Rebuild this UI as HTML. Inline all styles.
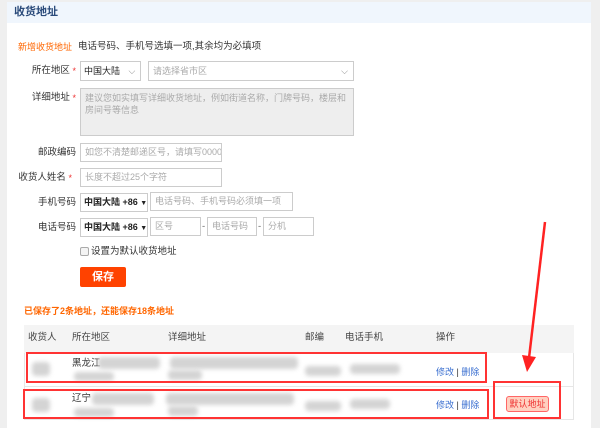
<!DOCTYPE html>
<html><head><meta charset="utf-8"><style>
*{margin:0;padding:0;box-sizing:border-box}
body{width:600px;height:428px;overflow:hidden;background:#efefef;font-family:"Liberation Sans","Noto Sans CJK SC",sans-serif;font-size:9.5px;color:#333;position:relative;line-height:12px}
.abs{position:absolute}
#panel{left:7px;top:2px;width:584px;height:426px;background:#fff}
#hd{left:7px;top:2px;width:584px;height:21px;background:#f0f6fd;color:#2a4a7a;font-size:11px;padding:4px 7px;font-weight:bold}
.lbl{width:70px;text-align:right;font-size:9.5px;color:#333;white-space:nowrap}
.lbl i{color:#e33;font-style:normal;font-size:9px;vertical-align:top}
.in{border:1px solid #ccc;background:#fff;color:#aaa;font-size:9px;padding:0 4px;white-space:nowrap;overflow:hidden;line-height:17px}
.sel{border:1px solid #ccc;background:#fff;color:#222;font-size:9px;padding:0 3px;font-weight:bold;white-space:nowrap;overflow:hidden;line-height:17px}
.blob{background:#d4d4d4;filter:blur(2px);border-radius:4px}
.th{top:332px;font-size:9.5px;color:#444}
.rb{border:2px solid #f33}
a{color:#3a6fd0;text-decoration:none}
</style></head><body>
<div id="panel" class="abs"></div>
<div id="hd" class="abs">收货地址</div>
<div class="abs" style="left:18px;top:41px;color:#f60;font-size:9px">新增收货地址</div>
<div class="abs" style="left:78px;top:41px">电话号码、手机号选填一项,其余均为必填项</div>

<div class="abs lbl" style="left:6px;top:65px">所在地区 <i>*</i></div>
<div class="abs sel" style="left:80px;top:61px;width:61px;height:20px;font-weight:normal;line-height:18px">中国大陆 <span style="color:#888;margin-left:6px">⌵</span></div>
<div class="abs in" style="left:148px;top:61px;width:206px;height:20px;line-height:18px">请选择省市区<span class="abs" style="right:5px;top:0;color:#888">⌵</span></div>

<div class="abs lbl" style="left:6px;top:92px">详细地址 <i>*</i></div>
<div class="abs in" style="left:80px;top:88px;width:274px;height:48px;background:#eee;white-space:normal;line-height:12px;padding:3px 4px;font-size:9px">建议您如实填写详细收货地址，例如街道名称，门牌号码，楼层和房间号等信息</div>

<div class="abs lbl" style="left:6px;top:147px">邮政编码</div>
<div class="abs in" style="left:80px;top:143px;width:142px;height:19px">如您不清楚邮递区号，请填写000000</div>
<div class="abs lbl" style="left:2px;top:172px">收货人姓名 <i>*</i></div>
<div class="abs in" style="left:80px;top:168px;width:142px;height:19px">长度不超过25个字符</div>

<div class="abs lbl" style="left:6px;top:197px">手机号码</div>
<div class="abs sel" style="left:80px;top:193px;width:68px;height:19px">中国大陆 +86 <span style="font-size:7px">▼</span></div>
<div class="abs in" style="left:150px;top:192px;width:143px;height:19px">电话号码、手机号码必须填一项</div>
<div class="abs lbl" style="left:6px;top:222px">电话号码</div>
<div class="abs sel" style="left:80px;top:218px;width:68px;height:19px">中国大陆 +86 <span style="font-size:7px">▼</span></div>
<div class="abs in" style="left:150px;top:217px;width:51px;height:19px">区号</div>
<div class="abs" style="left:202px;top:221px;color:#666">-</div>
<div class="abs in" style="left:207px;top:217px;width:50px;height:19px">电话号码</div>
<div class="abs" style="left:258px;top:221px;color:#666">-</div>
<div class="abs in" style="left:263px;top:217px;width:51px;height:19px">分机</div>

<div class="abs" style="left:80px;top:247px;width:9px;height:9px;border:1px solid #aaa;border-radius:2px;background:#f4f4f4"></div>
<div class="abs" style="left:91px;top:246px">设置为默认收货地址</div>
<div class="abs" style="left:80px;top:267px;width:46px;height:20px;background:#ff4200;border-radius:2px;color:#fff;font-weight:bold;font-size:11px;text-align:center;line-height:20px">保存</div>

<div class="abs" style="left:24px;top:305px;color:#f60;font-weight:bold;font-size:9px">已保存了2条地址，还能保存18条地址</div>

<div class="abs" style="left:24px;top:325px;width:550px;height:95px;border:1px solid #e6e6e6"></div>
<div class="abs" style="left:24px;top:325px;width:550px;height:28px;background:#f4f4f4"></div>
<div class="abs" style="left:24px;top:386px;width:550px;height:1px;background:#e6e6e6"></div>
<div class="abs th" style="left:28px">收货人</div>
<div class="abs th" style="left:72px">所在地区</div>
<div class="abs th" style="left:168px">详细地址</div>
<div class="abs th" style="left:305px">邮编</div>
<div class="abs th" style="left:345px">电话手机</div>
<div class="abs th" style="left:436px">操作</div>

<div class="abs blob" style="left:32px;top:362px;width:18px;height:14px"></div>
<div class="abs" style="left:72px;top:358px">黑龙江</div>
<div class="abs blob" style="left:98px;top:357px;width:62px;height:12px"></div>
<div class="abs blob" style="left:74px;top:372px;width:40px;height:9px"></div>
<div class="abs blob" style="left:170px;top:357px;width:128px;height:12px"></div>
<div class="abs blob" style="left:168px;top:370px;width:34px;height:10px"></div>
<div class="abs blob" style="left:305px;top:366px;width:36px;height:10px"></div>
<div class="abs blob" style="left:350px;top:364px;width:50px;height:10px"></div>
<div class="abs" style="left:436px;top:366px;font-size:9px"><a>修改</a> | <a>删除</a></div>

<div class="abs blob" style="left:32px;top:398px;width:18px;height:14px"></div>
<div class="abs" style="left:72px;top:393px">辽宁</div>
<div class="abs blob" style="left:92px;top:393px;width:62px;height:12px"></div>
<div class="abs blob" style="left:74px;top:408px;width:40px;height:9px"></div>
<div class="abs blob" style="left:166px;top:393px;width:128px;height:12px"></div>
<div class="abs blob" style="left:168px;top:406px;width:30px;height:10px"></div>
<div class="abs blob" style="left:305px;top:401px;width:36px;height:10px"></div>
<div class="abs blob" style="left:350px;top:399px;width:40px;height:10px"></div>
<div class="abs" style="left:436px;top:399px;font-size:9px"><a>修改</a> | <a>删除</a></div>

<div class="abs" style="left:506px;top:396px;width:43px;height:16px;background:#ffd0c0;border:1px solid #f66;border-radius:3px;color:#e33;font-size:9px;text-align:center;line-height:14px">默认地址</div>

<div class="abs rb" style="left:26px;top:352px;width:461px;height:31px"></div>
<div class="abs rb" style="left:23px;top:389px;width:466px;height:30px"></div>
<div class="abs rb" style="left:493px;top:381px;width:68px;height:38px"></div>

<svg class="abs" style="left:0;top:0" width="600" height="428"><line x1="545" y1="222" x2="529" y2="358" stroke="#f22" stroke-width="2.5"/><polygon points="522,355 536,357 527,372" fill="#f22"/></svg>
</body></html>
